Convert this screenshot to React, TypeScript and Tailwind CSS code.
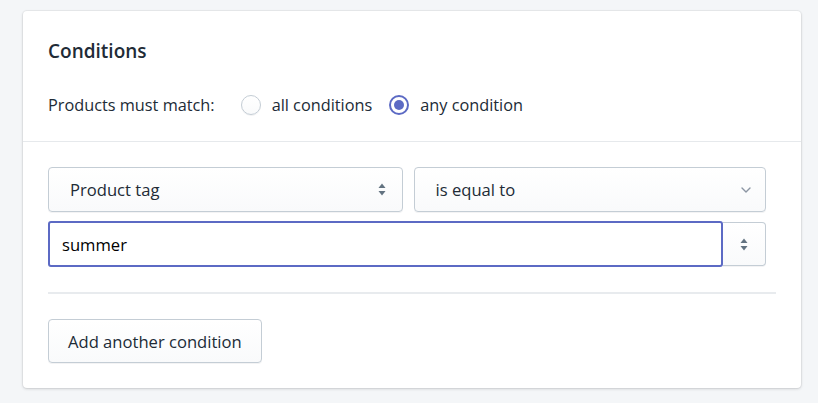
import React from 'react';

const font = { fontFamily: '"Open Sans", "Noto Sans", sans-serif' };

function UpDownArrows({ className }: { className?: string }) {
  return (
    <svg viewBox="0 0 8 13" width="8" height="13" className={className}>
      <path d="M0.5 5 L4 0.5 L7.5 5 Z" fill="currentColor" />
      <path d="M0.5 8 L4 12.5 L7.5 8 Z" fill="currentColor" />
    </svg>
  );
}

function ChevronDown() {
  return (
    <svg viewBox="0 0 10 6" width="10" height="6" className="text-[#8c96a3]">
      <path d="M1 1 L5 5 L9 1" fill="none" stroke="currentColor" strokeWidth="1.4" strokeLinecap="round" strokeLinejoin="round" />
    </svg>
  );
}

function Radio({ checked, label, className = '' }: { checked?: boolean; label: string; className?: string }) {
  return (
    <label className={`flex items-center ${className}`}>
      {checked ? (
        <span className="flex h-5 w-5 items-center justify-center rounded-full border-2 border-[#5c6ac4] bg-white">
          <span className="h-[10px] w-[10px] rounded-full bg-[#5c6ac4]" />
        </span>
      ) : (
        <span className="h-5 w-5 rounded-full border border-[#c4cdd5] bg-linear-to-b from-white to-[#f9fafb] shadow-[0_1px_0_0_rgba(22,29,37,0.05)]" />
      )}
      <span className="ml-[11px]">{label}</span>
    </label>
  );
}

const boxCls =
  'border border-[#c4cdd5] bg-linear-to-b from-white to-[#f9fafb] shadow-[0_1px_0_0_rgba(22,29,37,0.05)]';

export default function App() {
  return (
    <div className="min-h-screen bg-[#f4f6f8] pl-[23px] pt-[11px] text-[#212b36]" style={font}>
      <div className="w-[778px] rounded-[4px] bg-white shadow-[0_0_0_1px_rgba(63,63,68,0.05),0_1px_3px_0_rgba(63,63,68,0.2)]">
        <div className="border-b border-[#e6e9ec] px-[25px] pt-[28px] pb-[24px]">
          <h2 className="text-[19px] font-semibold leading-[25px]">Conditions</h2>
          <div className="mt-[29px] flex h-[24px] items-center text-[16.3px]">
            <span>Products must match:</span>
            <Radio label="all conditions" className="ml-[26px]" />
            <Radio label="any condition" checked className="ml-[17px]" />
          </div>
        </div>

        <div className="px-[25px] pt-[25px] pb-[25px] text-[16.6px]">
          <div className="mr-[10px] flex gap-[11px]">
            <div className={`flex h-[45px] flex-1 items-center justify-between rounded-[4px] pl-[21px] pr-[16px] ${boxCls}`}>
              <span className="pt-[2px]">Product tag</span>
              <UpDownArrows className="text-[#637381]" />
            </div>
            <div className={`flex h-[45px] flex-1 items-center justify-between rounded-[4px] pl-[21px] pr-[14px] ${boxCls}`}>
              <span className="pt-[2px]">is equal to</span>
              <ChevronDown />
            </div>
          </div>

          <div className="mt-[9px] mr-[10px] flex h-[46px]">
            <div className="flex flex-1 items-center rounded-[3px] border-2 border-[#5c6ac4] bg-white pl-[12px]">
              <span className="pt-[3px] text-[#000]">summer</span>
            </div>
            <div className={`my-px flex w-[43px] items-center justify-center rounded-r-[4px] ${boxCls} border-l-0`}>
              <UpDownArrows className="text-[#637381]" />
            </div>
          </div>

          <div className="mt-[25px] h-[2px] bg-[#e8ebee]" />

          <button
            className={`mt-[25px] flex h-[44px] items-center rounded-[4px] px-[19px] pt-[2px] text-[16.6px] ${boxCls}`}
            style={font}
          >
            Add another condition
          </button>
        </div>
      </div>
    </div>
  );
}
